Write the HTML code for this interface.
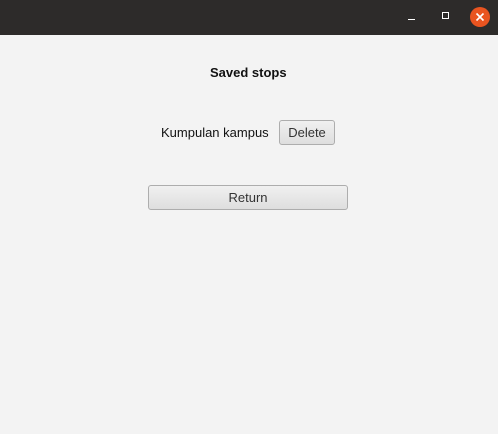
<!DOCTYPE html>
<html><head><style>
body{margin:0;width:498px;height:434px;background:#f3f3f3;font-family:"Liberation Sans",sans-serif;position:relative;overflow:hidden}
.tb{position:absolute;left:0;top:0;width:498px;height:35px;background:#2d2b2a}
.t{position:absolute;font-size:13px;color:#111}
.btn{position:absolute;box-sizing:border-box;border:1px solid #adadad;border-radius:3px;background:linear-gradient(#f0f0f0,#dedede);font-size:13px;color:#333;text-align:center}
</style></head><body>
<div class="tb">
<div style="position:absolute;left:408px;top:19px;width:7px;height:1px;background:#fff"></div>
<div style="position:absolute;left:442px;top:12px;width:7px;height:7px;box-sizing:border-box;border:1px solid #fff"></div>
<div style="position:absolute;left:470px;top:7px;width:20px;height:20px;border-radius:50%;background:#e95420"></div>
<svg style="position:absolute;left:470px;top:7px" width="20" height="20"><path d="M6.5 6.5L13.5 13.5M13.5 6.5L6.5 13.5" stroke="#fff" stroke-width="1.6"/></svg>
</div>
<div class="t" style="left:210px;top:65px;font-weight:bold">Saved stops</div>
<div class="t" style="left:161px;top:125px">Kumpulan kampus</div>
<div class="btn" style="left:279px;top:120px;width:56px;height:25px;line-height:23px">Delete</div>
<div class="btn" style="left:148px;top:185px;width:200px;height:25px;line-height:23px">Return</div>
</body></html>
